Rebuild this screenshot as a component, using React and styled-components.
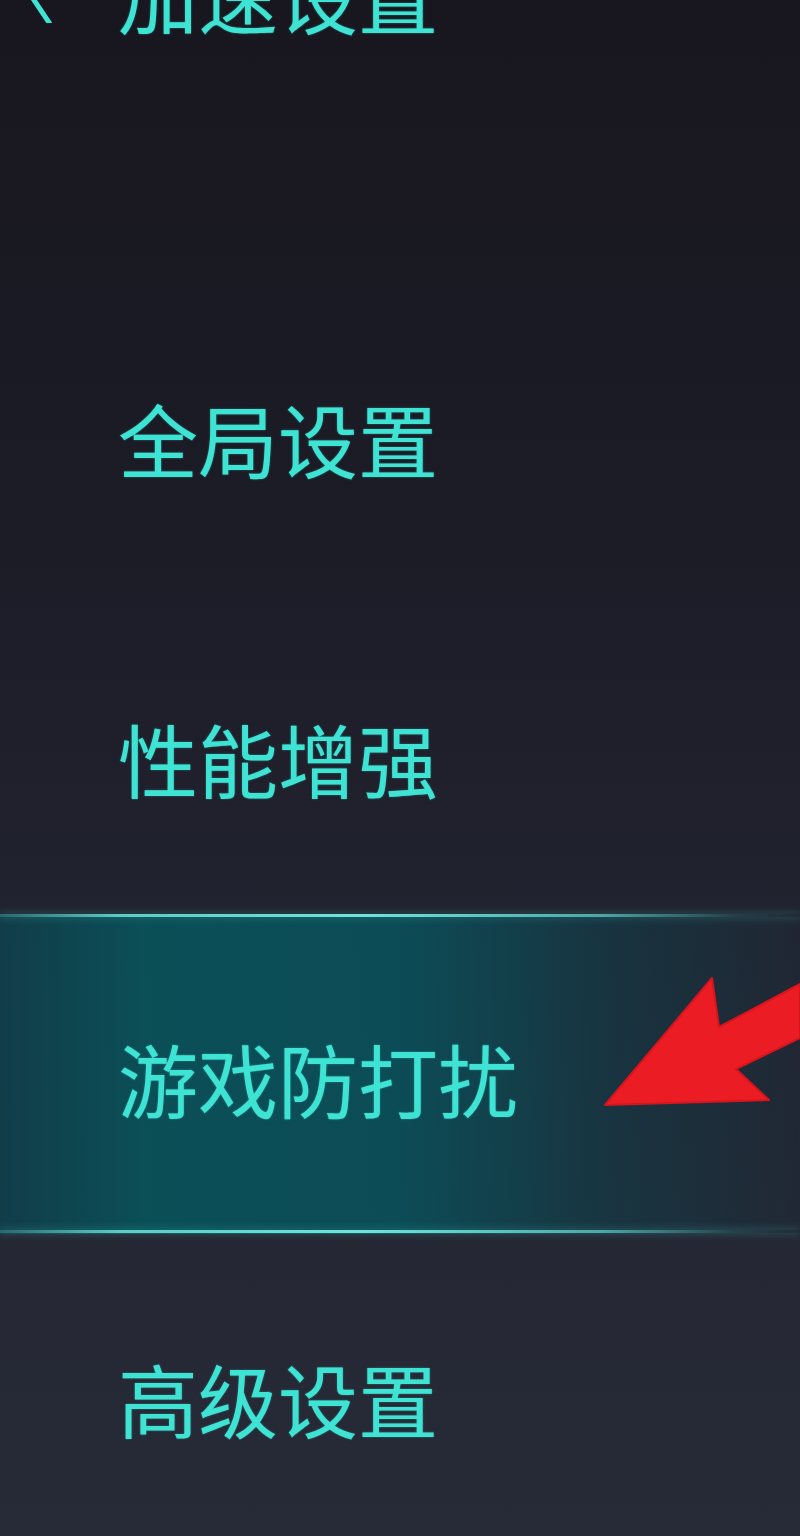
import React from 'react';
import styled, { createGlobalStyle } from 'styled-components';

const GlobalStyle = createGlobalStyle`
  html, body {
    margin: 0;
    padding: 0;
    background: #1b1b26;
  }
  body {
    font-family: 'Noto Sans CJK SC', 'Noto Sans', sans-serif;
  }
`;

const Page = styled.div`
  width: 800px;
  height: 1536px;
  overflow: hidden;
  display: flex;
  flex-direction: column;
  background: linear-gradient(180deg, #18171f 0%, #1c1c27 35%, #222431 65%, #272a37 100%);
`;

const Header = styled.div`
  display: flex;
  align-items: center;
  height: 126px;
  margin-top: -70px;
  padding-left: 22px;
  gap: 66px;
  flex-shrink: 0;
`;

const BackButton = styled.svg`
  width: 30px;
  height: 60px;
  flex-shrink: 0;
`;

const Title = styled.h1`
  margin: 0;
  font-size: 80px;
  font-weight: 400;
  line-height: 1;
  color: #3ee3d3;
  text-shadow: 0 0 2px rgba(60, 230, 215, 0.5);
`;

const List = styled.ul`
  list-style: none;
  margin: 218px 0 0;
  padding: 0;
  display: flex;
  flex-direction: column;
`;

const Row = styled.li`
  position: relative;
  display: flex;
  align-items: center;
  height: 320px;
  padding-left: 118px;
  box-sizing: border-box;
  background: ${p => (p.$active
    ? 'linear-gradient(90deg, rgba(16,62,74,0.95) 0%, rgba(10,80,88,0.97) 18%, rgba(11,78,88,0.95) 50%, rgba(20,58,70,0.75) 75%, rgba(30,42,54,0.45) 100%)'
    : 'transparent')};

  &::before,
  &::after {
    content: '';
    display: ${p => (p.$active ? 'block' : 'none')};
    position: absolute;
    left: 0;
    right: 0;
    height: 3px;
    background: linear-gradient(90deg, rgba(90,180,180,0.35) 0%, rgba(110,225,215,0.85) 15%, rgba(120,235,225,0.95) 45%, rgba(100,215,210,0.7) 75%, rgba(80,170,170,0.15) 92%, rgba(60,120,130,0.05) 100%);
    box-shadow: 0 0 8px rgba(70, 210, 200, 0.45);
  }
  &::before { top: 0; }
  &::after { bottom: 1px; }
`;

const Label = styled.span`
  font-size: 80px;
  font-weight: 400;
  line-height: 1;
  color: #3ee3d3;
  text-shadow: 0 0 2px rgba(60, 230, 215, 0.5);
  margin-top: 6px;
`;

const Pointer = styled.svg`
  position: absolute;
  left: 600px;
  top: 61px;
  width: 200px;
  height: 135px;
`;

const items = ['全局设置', '性能增强', '游戏防打扰', '高级设置'];

export default function App() {
  return (
    <>
      <GlobalStyle />
      <Page>
        <Header>
          <BackButton viewBox="0 0 30 60">
            <polyline points="28,34 8,64 28,94" transform="translate(0,-33)" fill="none" stroke="#3ee3d3" strokeWidth="5" strokeLinecap="round" strokeLinejoin="round" />
          </BackButton>
          <Title>加速设置</Title>
        </Header>
        <List>
          {items.map(name => (
            <Row key={name} $active={name === '游戏防打扰'}>
              <Label>{name}</Label>
              {name === '游戏防打扰' && (
                <Pointer viewBox="600 975 200 135">
                  <polygon
                    points="605,1105 712,978 719,1027 800,984 800,1038 736,1069 769,1100"
                    fill="#ec1c24"
                    stroke="#d8141c"
                    strokeWidth="2"
                    strokeLinejoin="round"
                  />
                </Pointer>
              )}
            </Row>
          ))}
        </List>
      </Page>
    </>
  );
}
